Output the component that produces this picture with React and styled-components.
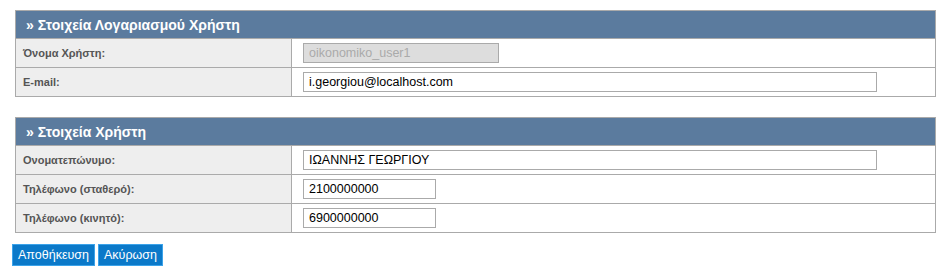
import React from "react";
import styled, { createGlobalStyle } from "styled-components";

const GlobalStyle = createGlobalStyle`
  body {
    margin: 0;
    background: #ffffff;
    font-family: "Liberation Sans", Arial, sans-serif;
  }
`;

const Page = styled.div`
  padding: 10px 13px 0 15px;
  width: 948px;
  box-sizing: border-box;
`;

const Section = styled.div`
  width: 921px;
  box-sizing: border-box;
  border: 1px solid #aaaaaa;
  margin-bottom: 20px;
`;

const Header = styled.div`
  height: 27px;
  background-color: #5b7b9e;
  color: #ffffff;
  font-weight: bold;
  font-size: 14px;
  display: flex;
  align-items: center;
  padding-left: 10px;
`;

const Row = styled.div`
  display: grid;
  grid-template-columns: 276px 1fr;
  height: 28px;
  border-top: 1px solid #aaaaaa;
`;

const Label = styled.div`
  background-color: #eeeeee;
  border-right: 1px solid #aaaaaa;
  color: #555555;
  font-weight: bold;
  font-size: 11px;
  display: flex;
  align-items: center;
  padding-left: 7px;
`;

const Value = styled.div`
  display: flex;
  align-items: center;
  padding-left: 11px;
`;

const Input = styled.input`
  width: ${(p) => p.$w}px;
  height: 20px;
  box-sizing: border-box;
  border: 1px solid #aaaaaa;
  font-family: "Liberation Sans", Arial, sans-serif;
  font-size: 12.5px;
  color: #000000;
  padding: 0 5px;
  margin: 0;
  outline: none;
  background: #ffffff;

  &:disabled {
    background: #dddddd;
    color: #aaaaaa;
  }
`;

const Buttons = styled.div`
  display: flex;
  gap: 3px;
  margin-top: -9px;
  margin-left: -3px;
`;

const Button = styled.button`
  height: 22px;
  box-sizing: border-box;
  background-color: #0b79c9;
  border: 1px solid #3ba3ea;
  color: #ffffff;
  font-family: "Liberation Sans", Arial, sans-serif;
  font-size: 12.5px;
  padding: 0 5px;
  cursor: pointer;
`;

const accountFields = [
  { label: "Όνομα Χρήστη:", value: "oikonomiko_user1", w: 196, disabled: true },
  { label: "E-mail:", value: "i.georgiou@localhost.com", w: 574 },
];

const userFields = [
  { label: "Ονοματεπώνυμο:", value: "ΙΩΑΝΝΗΣ ΓΕΩΡΓΙΟΥ", w: 574 },
  { label: "Τηλέφωνο (σταθερό):", value: "2100000000", w: 133 },
  { label: "Τηλέφωνο (κινητό):", value: "6900000000", w: 133 },
];

function FormSection({ title, fields }) {
  return (
    <Section>
      <Header>» {title}</Header>
      {fields.map((f) => (
        <Row key={f.label}>
          <Label>{f.label}</Label>
          <Value>
            <Input $w={f.w} defaultValue={f.value} disabled={f.disabled} />
          </Value>
        </Row>
      ))}
    </Section>
  );
}

export default function App() {
  return (
    <Page>
      <GlobalStyle />
      <FormSection title="Στοιχεία Λογαριασμού Χρήστη" fields={accountFields} />
      <FormSection title="Στοιχεία Χρήστη" fields={userFields} />
      <Buttons>
        <Button>Αποθήκευση</Button>
        <Button>Ακύρωση</Button>
      </Buttons>
    </Page>
  );
}
